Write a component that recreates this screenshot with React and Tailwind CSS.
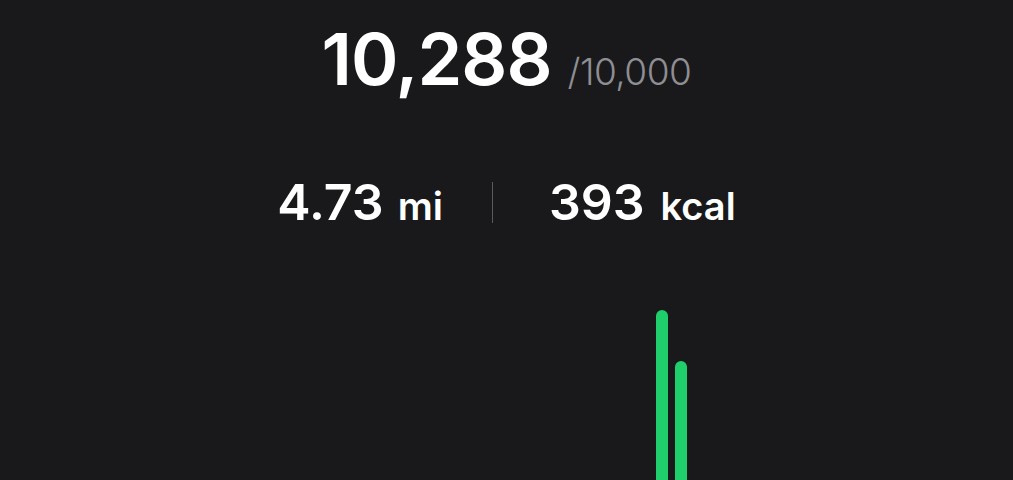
export default function App() {
  // hourly steps, only two hours have data in this view
  const hours = Array.from({ length: 24 }, (_, i) => (i === 20 ? 209 : i === 21 ? 158 : 0))

  return (
    <div className="h-[480px] overflow-hidden bg-[#19191b] text-white font-['Inter',sans-serif]">
      <div className="flex items-baseline justify-center gap-4 pt-[23px]">
        <span className="text-[72px] leading-none font-semibold tracking-[-1px]">10,288</span>
        <span className="text-[37px] leading-none font-light text-[#8e8e93] tracking-[-0.5px]">/10,000</span>
      </div>

      <div className="flex items-center justify-center mt-[82px]">
        <div className="flex items-baseline gap-[14px]">
          <span className="text-[50px] leading-none font-semibold">4.73</span>
          <span className="text-[39px] leading-none font-semibold">mi</span>
        </div>
        <div className="w-px h-[41px] bg-[#5a5a5e] ml-[49px] mr-[56px]" />
        <div className="flex items-baseline gap-4">
          <span className="text-[50px] leading-none font-semibold">393</span>
          <span className="text-[38px] leading-none font-semibold">kcal</span>
        </div>
      </div>

      <div className="flex justify-center mt-[62px] pr-[13px]">
        <div className="flex items-end gap-[7px] h-[230px]">
          {hours.map((h, i) => (
            <div
              key={i}
              className="w-[12px] rounded-full bg-[#1fcf6b]"
              style={{ height: h }}
            />
          ))}
        </div>
      </div>
    </div>
  )
}
